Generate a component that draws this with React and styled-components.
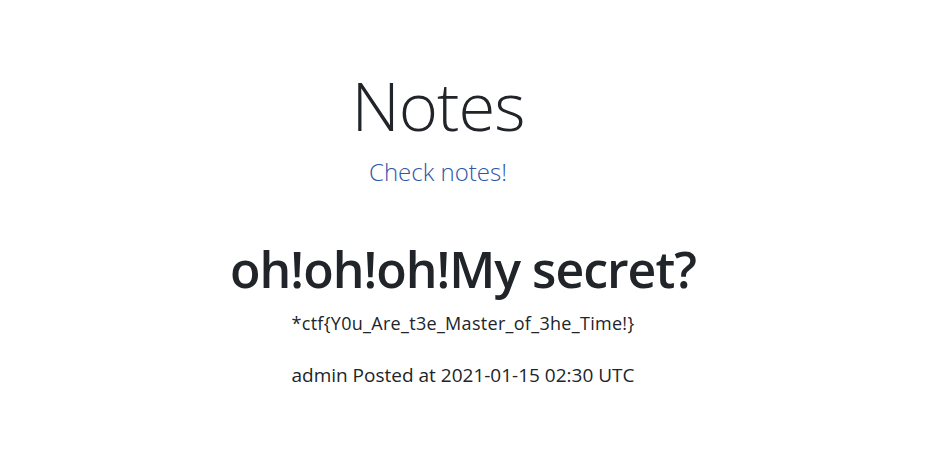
import React from "react";
import styled, { createGlobalStyle } from "styled-components";

const Global = createGlobalStyle`
  html, body { margin: 0; padding: 0; background: #fff; }
  body {
    font-family: "Open Sans", "Noto Sans", "Liberation Sans", sans-serif;
    color: #212529;
  }
`;

const Page = styled.main`
  display: flex;
  flex-direction: column;
  align-items: center;
  padding: 0 21px 0 0;
`;

const Header = styled.header`
  display: flex;
  flex-direction: column;
  align-items: center;
  padding: 65px 50px 0 0;
`;

const Title = styled.h1`
  margin: 0;
  font-size: 67px;
  font-weight: 300;
  line-height: 1.2;
  letter-spacing: -1px;
`;

const CheckLink = styled.a`
  margin-top: 13px;
  font-size: 24px;
  font-weight: 300;
  line-height: 1.2;
  color: #2d56a8;
  text-decoration: none;
`;

const Note = styled.article`
  display: flex;
  flex-direction: column;
  align-items: center;
  margin-top: 52px;
`;

const NoteTitle = styled.h2`
  margin: 0;
  font-size: 50px;
  font-weight: 600;
  line-height: 1.2;
  letter-spacing: -1px;
`;

const NoteBody = styled.p`
  margin: 11px 0 0;
  font-size: 18px;
  line-height: 1.5;
  letter-spacing: 0.3px;
`;

const Meta = styled.p`
  margin: 24px 0 0;
  font-size: 19px;
  line-height: 1.5;
`;

export default function App() {
  return (
    <>
      <Global />
      <Page>
        <Header>
          <Title>Notes</Title>
          <CheckLink href="#">Check notes!</CheckLink>
        </Header>
        <Note>
          <NoteTitle>oh!oh!oh!My secret?</NoteTitle>
          <NoteBody>*ctf{"{"}Y0u_Are_t3e_Master_of_3he_Time!{"}"}</NoteBody>
          <Meta>admin Posted at 2021-01-15 02:30 UTC</Meta>
        </Note>
      </Page>
    </>
  );
}
